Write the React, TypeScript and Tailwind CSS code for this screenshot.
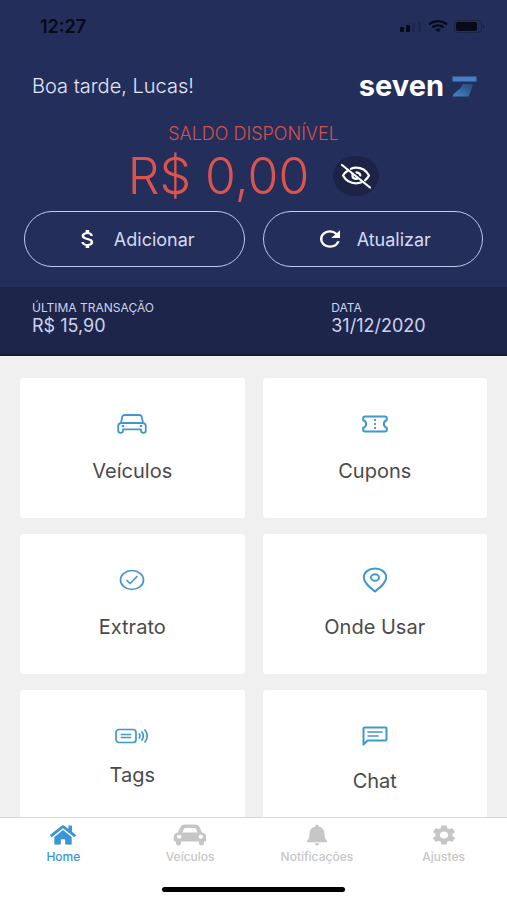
import type { ReactNode } from "react";
import { FaHome } from "react-icons/fa";
import { MdAttachMoney, MdRefresh, MdSettings } from "react-icons/md";

const line = {
  fill: "none",
  stroke: "currentColor",
  strokeWidth: 2,
  strokeLinecap: "round",
  strokeLinejoin: "round",
} as const;

function CarOutline() {
  return (
    <svg viewBox="0 0 30 20" className="h-5 w-[30px]" {...line} strokeWidth={1.8}>
      <path d="M4 9 5.300 2.800Q5.800 1 7.800 1h14.400q2 0 2.500 1.800L26 9M4 9h22M4 9Q1.200 9.600 1.200 12V16.500q0 2.300 2.400 2.300T6 16.500V15.400h18v1.100q0 2.300 2.400 2.300t2.400-2.300V12Q28.800 9.600 26 9" />
      <path d="M5.500 12h1M23.500 12h1" />
    </svg>
  );
}

function TicketOutline() {
  return (
    <svg viewBox="0 0 26 18" className="h-[18px] w-[26px]" {...line}>
      <path d="M3 1.500h20q1.800 0 1.800 1.500v2q-3 1.500-3 4t3 4v2q0 1.500-1.800 1.500H3q-1.800 0-1.800-1.500v-2q3-1.500 3-4t-3-4V3Q1.200 1.500 3 1.500Z" />
      <path d="M13 4.800v.4M13 8.800v.4M13 12.800v.4" />
    </svg>
  );
}

function CheckOutline() {
  return (
    <svg viewBox="0 0 26 22" className="h-[22px] w-[26px]" {...line} strokeWidth={1.7}>
      <ellipse cx="13" cy="11" rx="11.5" ry="9.5" />
      <path d="m8 11.500 3.200 3 6.800-7" />
    </svg>
  );
}

function PinOutline() {
  return (
    <svg viewBox="0 0 26 26" className="h-[26px] w-[26px]" {...line}>
      <path d="M13 24.500C8 20.500 1.800 16 1.800 10.500 1.800 5.500 6.500 1.500 13 1.500s11.200 4 11.200 9c0 5.500-6.200 10-11.200 14Z" />
      <ellipse cx="13" cy="10.5" rx="4" ry="3.3" />
    </svg>
  );
}

function TagOutline() {
  return (
    <svg viewBox="0 0 34 16" className="h-4 w-[34px]" {...line} strokeWidth={1.7}>
      <rect x="1" y="1.5" width="20" height="13" rx="3" />
      <path d="M6.500 6.500h9M6.500 9.500h9M24.300 6q1.200 2 0 4M27 4q2.500 4 0 8M30 2q4.500 6 0 12" />
    </svg>
  );
}

function ChatOutline() {
  return (
    <svg viewBox="0 0 26 20" className="h-5 w-[26px]" {...line}>
      <path d="M1.500 18.500V2.500q0-1 1.200-1h20.600q1.200 0 1.200 1v11q0 1-1.200 1H5.500Z" />
      <path d="M6 6h14M6 10h10" strokeWidth="1.6" />
    </svg>
  );
}

function HiddenEye() {
  return (
    <svg viewBox="0 0 32 26" className="h-[26px] w-8" {...line} strokeWidth={2.2}>
      <path d="M11 5.800Q13.500 4.700 16 4.700c6 0 10.500 3.300 13 7.800-1 2-2.300 3.500-4 4.800M8 7.500Q4.700 9.500 3 12.500c2.500 4.500 7 7.800 13 7.800q3 0 5.500-1M12.500 11.500q-.7 4.500 4.500 4.500M16.500 9.300q3.500.3 3.800 3.200" />
      <path d="M2 2 30 24.500" />
    </svg>
  );
}

function CarSolid() {
  return (
    <svg viewBox="0 0 34 22" className="h-[22px] w-[34px]" fill="currentColor">
      <path
        fillRule="evenodd"
        d="M5 8.500 7.600 2.800Q8.800.5 12 .5h10q3.200 0 4.400 2.300L29 8.500q4.200.8 4.200 4.500v3.500q0 .9-1 .9h-1.200v1.800q0 2.300-2.500 2.300T26 19.200v-1.800H8v1.800q0 2.300-2.500 2.300T3 19.200v-1.800H1.800q-1 0-1-.9V13Q.8 9.300 5 8.500Zm4.300 0h15.400l-1.900-4Q22.500 4 21.600 4h-9.200q-.9 0-1.200.5ZM6.200 10.800a2.300 2 0 1 0 0 4 2.300 2 0 1 0 0-4Zm21.600 0a2.300 2 0 1 0 0 4 2.300 2 0 1 0 0-4Z"
      />
    </svg>
  );
}

function BellSolid() {
  return (
    <svg viewBox="0 0 22 22" className="h-[22px] w-[22px]" fill="currentColor">
      <path d="M11 .5q1.700 0 1.700 1.900Q18.500 3.500 18.500 10q0 5 2.500 6.800v1.400H1v-1.400Q3.500 15 3.500 10q0-6.500 5.800-7.600Q9.300.5 11 .5ZM8.800 19.300h4.400q0 2.200-2.200 2.200t-2.200-2.200Z" />
    </svg>
  );
}

function StatusIcons() {
  return (
    <svg viewBox="0 0 88 16" className="h-4 w-[88px] text-[#070a18]" fill="currentColor">
      <rect x="1" y="9" width="4" height="5" rx="1" />
      <rect x="7" y="7" width="4" height="7" rx="1" />
      <rect x="13" y="5" width="3" height="9" rx="1" opacity=".2" />
      <rect x="19" y="3" width="3" height="11" rx="1" opacity=".2" />
      <g fill="none" stroke="currentColor" strokeWidth="2.3">
        <path d="M30 6.200q9-6.200 18 0M33.200 9.300q5.800-4 11.600 0" />
      </g>
      <path d="M36 11.500q3-2 6 0L39 14Z" />
      <rect x="55.5" y="2.5" width="27" height="12" rx="3.5" fill="none" stroke="currentColor" opacity=".3" />
      <rect x="57" y="4" width="21" height="9" rx="2" />
      <path d="M84 6.500q3 2 0 4Z" opacity=".4" />
    </svg>
  );
}

function Logo() {
  return (
    <div className="flex items-center gap-2">
      <span className="text-[29px] leading-8 font-bold text-white">seven</span>
      <svg viewBox="0 0 25 21" className="h-[21px] w-[25px]">
        <defs>
          <linearGradient id="stem" x1="1" y1="0" x2="0" y2="1">
            <stop offset="0" stopColor="#28447c" />
            <stop offset="1" stopColor="#4288c8" />
          </linearGradient>
        </defs>
        <path d="M.5.500h24v5H.5Z" fill="#4580c0" />
        <path d="M11 8h10.500l-5 12.500H.5q1-3 4.500-5.500 4-2.500 6-7Z" fill="url(#stem)" />
      </svg>
    </div>
  );
}

const cards: { label: string; icon: ReactNode; gap: string }[] = [
  { label: "Veículos", icon: <CarOutline />, gap: "mt-5" },
  { label: "Cupons", icon: <TicketOutline />, gap: "mt-5" },
  { label: "Extrato", icon: <CheckOutline />, gap: "mt-5" },
  { label: "Onde Usar", icon: <PinOutline />, gap: "mt-5" },
  { label: "Tags", icon: <TagOutline />, gap: "mt-3" },
  { label: "Chat", icon: <ChatOutline />, gap: "mt-[18px]" },
];

const tabs: { label: string; icon: ReactNode; active?: boolean }[] = [
  {
    label: "Home",
    icon: <FaHome className="h-[22px] w-[26px]" preserveAspectRatio="none" />,
    active: true,
  },
  { label: "Veículos", icon: <CarSolid /> },
  { label: "Notificações", icon: <BellSolid /> },
  {
    label: "Ajustes",
    icon: <MdSettings className="h-6 w-7" preserveAspectRatio="none" />,
  },
];

const pill =
  "flex h-14 items-center justify-center rounded-full border border-[#c3c9ea] text-[18px] text-[#d5daf2]";

export default function App() {
  return (
    <div className="flex h-screen flex-col bg-[#f0f0f0] font-['Inter','Liberation_Sans',sans-serif]">
      <header className="shrink-0 bg-[#242e5b]">
        <div className="flex h-[52px] items-center justify-between pr-5 pl-10">
          <span className="text-[18px] font-semibold text-[#070a18]">12:27</span>
          <StatusIcons />
        </div>

        <div className="flex h-[68px] items-center justify-between pr-[30px] pl-8">
          <p className="text-[20px] font-light text-[#e2e6f8]">Boa tarde, Lucas!</p>
          <Logo />
        </div>

        <section className="px-6">
          <h1 className="pt-1 text-center text-[18px] leading-5 font-light text-[#d3524f]">
            SALDO DISPONÍVEL
          </h1>
          <div className="flex h-[67px] items-center justify-center gap-6 pb-1">
            <span className="text-[50px] leading-none font-light text-[#dc544e]">R$ 0,00</span>
            <button
              type="button"
              aria-label="Ocultar saldo"
              className="flex h-10 w-[46px] items-center justify-center rounded-[50%] bg-[#1c2347] text-white"
            >
              <HiddenEye />
            </button>
          </div>
          <div className="grid grid-cols-2 gap-[18px] pb-5">
            <button type="button" className={`${pill} gap-3`}>
              <MdAttachMoney className="h-6 w-7 text-white" preserveAspectRatio="none" />
              Adicionar
            </button>
            <button type="button" className={`${pill} gap-3`}>
              <MdRefresh className="h-[26px] w-[30px] text-white" preserveAspectRatio="none" />
              Atualizar
            </button>
          </div>
        </section>

        <dl className="flex h-[69px] border-b-2 border-[#191c30] bg-[#1e254a] pt-[13px] pl-8 text-[#cdd3ef]">
          <div className="w-[63%]">
            <dt className="text-[12px] leading-4">ÚLTIMA TRANSAÇÃO</dt>
            <dd className="text-[18px] leading-5">R$ 15,90</dd>
          </div>
          <div>
            <dt className="text-[12px] leading-4">DATA</dt>
            <dd className="text-[18px] leading-5">31/12/2020</dd>
          </div>
        </dl>
      </header>

      <main className="min-h-0 flex-1 overflow-hidden px-5 pt-[22px]">
        <div className="grid grid-cols-2 gap-x-[18px] gap-y-4">
          {cards.map((card) => (
            <a
              key={card.label}
              href="#"
              className="flex h-[140px] flex-col items-center rounded-[3px] bg-white pt-8 text-[#4a4a4a]"
            >
              <span className="flex h-7 items-center text-[#4197cf]">{card.icon}</span>
              <span className={`${card.gap} text-[20px] leading-[26px]`}>{card.label}</span>
            </a>
          ))}
        </div>
      </main>

      <nav className="shrink-0 border-t border-[#d8d8d8] bg-white">
        <div className="grid grid-cols-4 pt-1">
          {tabs.map((tab) => (
            <a
              key={tab.label}
              href="#"
              className={`flex flex-col items-center text-[12px] leading-4 font-medium ${
                tab.active ? "text-[#3b96d4]" : "text-[#c6c6c6]"
              }`}
            >
              <span className="flex h-[26px] items-center">{tab.icon}</span>
              <span className="mt-px">{tab.label}</span>
            </a>
          ))}
        </div>
        <div className="mx-auto mt-[22px] mb-2 h-[5px] w-[36%] rounded-full bg-black" />
      </nav>
    </div>
  );
}
